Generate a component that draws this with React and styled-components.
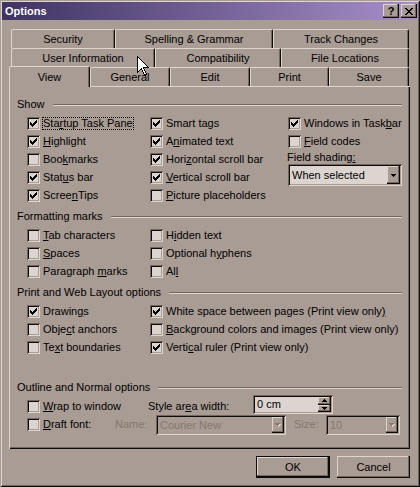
import React from "react";
import styled, { createGlobalStyle, css } from "styled-components";

const C = {
  face: "#a99c94",
  light: "#ded5ce",
  shadow: "#74675f",
  dark: "#0e0b0a",
  field: "#dcd5cf",
  gray: "#84776f",
};

const Global = createGlobalStyle`
  html, body { margin: 0; padding: 0; background: ${C.face}; }
  body {
    font-family: "Liberation Sans", Arial, sans-serif;
    font-size: 11px;
    line-height: 13px;
    color: #000;
  }
  #root { width: 420px; height: 487px; }
`;

const raised = css`
  box-shadow: inset -1px -1px 0 ${C.dark}, inset -2px -2px 0 ${C.shadow},
    inset 1px 1px 0 ${C.light};
`;

const sunken = css`
  box-shadow: inset 1px 1px 0 ${C.shadow}, inset -1px -1px 0 ${C.light},
    inset 2px 2px 0 ${C.dark}, inset -2px -2px 0 ${C.face};
`;

const Dialog = styled.div`
  position: relative;
  box-sizing: border-box;
  width: 420px;
  height: 487px;
  padding: 2px;
  display: flex;
  flex-direction: column;
  background: ${C.face};
  box-shadow: inset 1px 1px 0 ${C.face}, inset -1px -1px 0 ${C.dark},
    inset 2px 2px 0 ${C.light}, inset -2px -2px 0 ${C.shadow};
`;

const TitleBar = styled.div`
  height: 18px;
  flex: none;
  display: flex;
  align-items: center;
  padding: 0 1px 0 3px;
  background: linear-gradient(to right, #3e3363, #a78fc9);
`;

const Title = styled.span`
  flex: 1;
  color: #fff;
  font-weight: bold;
  font-size: 11px;
`;

const CapButton = styled.div`
  box-sizing: border-box;
  width: 16px;
  height: 14px;
  margin-left: 2px;
  display: flex;
  align-items: center;
  justify-content: center;
  background: ${C.face};
  font-weight: bold;
  font-size: 11px;
  line-height: 12px;
  ${raised};
`;

const Body = styled.div`
  flex: 1;
  display: flex;
  flex-direction: column;
  padding: 9px 8px 0 7px;
`;

const TabRow = styled.div`
  display: flex;
  align-items: flex-end;
  height: 19px;
  padding-left: ${(p) => p.$inset || 0}px;
`;

const Tab = styled.div`
  box-sizing: border-box;
  flex: none;
  width: ${(p) => p.$w}px;
  height: 19px;
  padding-top: 1px;
  display: flex;
  align-items: center;
  justify-content: center;
  white-space: nowrap;
  background: ${C.face};
  border-top: 1px solid ${C.light};
  border-left: 1px solid ${C.light};
  border-right: 1px solid ${C.dark};
  border-radius: 2px 2px 0 0;
  box-shadow: inset -1px 0 0 ${C.shadow};
  ${(p) =>
    p.$active &&
    css`
      position: relative;
      z-index: 1;
      height: 21px;
      margin-bottom: -1px;
      padding-top: 0;
    `}
`;

const Panel = styled.div`
  box-sizing: border-box;
  width: 401px;
  height: 363px;
  padding: 12px 8px 0 8px;
  background: ${C.face};
  box-shadow: inset 1px 1px 0 ${C.light}, inset -1px -1px 0 ${C.dark},
    inset -2px -2px 0 ${C.shadow};
`;

const GroupHead = styled.div`
  display: flex;
  align-items: center;
  height: 13px;
  margin-top: ${(p) => p.$mt || 0}px;
  margin-bottom: 4px;
  white-space: nowrap;
  &::after {
    content: "";
    flex: 1;
    margin-left: 8px;
    border-top: 1px solid ${C.shadow};
    border-bottom: 1px solid ${C.light};
  }
`;

const Columns = styled.div`
  display: grid;
  grid-template-columns: 123px 138px 1fr;
  padding-left: 10px;
`;

const Col = styled.div`
  display: flex;
  flex-direction: column;
  ${(p) => p.$span && css`grid-column: 2 / 4;`}
`;

const CheckRow = styled.div`
  box-sizing: border-box;
  display: flex;
  align-items: flex-start;
  height: 18px;
  padding-top: 2px;
  white-space: nowrap;
  ${(p) => p.$w && css`width: ${p.$w}px; flex: none;`}
`;

const Box = styled.span`
  box-sizing: border-box;
  flex: none;
  width: 13px;
  height: 13px;
  display: flex;
  align-items: center;
  justify-content: center;
  background: ${C.field};
  ${sunken};
`;

const Label = styled.span`
  margin-left: 2px;
  padding: 0 1px;
  height: 13px;
  ${(p) =>
    p.$focus &&
    css`
      outline: 1px dotted #000;
      outline-offset: -1px;
    `}
`;

const Key = styled.u`
  text-decoration: underline;
  text-underline-offset: 1px;
`;

const FieldLabel = styled.div`
  height: 13px;
  margin-left: -1px;
  margin-top: ${(p) => p.$mt || 0}px;
  white-space: nowrap;
  color: ${(p) => (p.$disabled ? C.gray : "inherit")};
  ${(p) => p.$w && css`width: ${p.$w}px; flex: none;`}
`;

const Combo = styled.div`
  box-sizing: border-box;
  flex: none;
  width: ${(p) => p.$w}px;
  height: ${(p) => p.$h}px;
  margin-top: ${(p) => p.$mt || 0}px;
  padding: 2px;
  display: flex;
  background: ${(p) => (p.$disabled ? C.face : C.field)};
  color: ${(p) => (p.$disabled ? C.gray : "#000")};
  ${sunken};
`;

const ComboText = styled.span`
  flex: 1;
  display: flex;
  align-items: center;
  padding-left: 2px;
  white-space: nowrap;
  overflow: hidden;
`;

const ArrowButton = styled.span`
  box-sizing: border-box;
  flex: ${(p) => (p.$fill ? 1 : "none")};
  width: ${(p) => p.$w || 12}px;
  display: flex;
  align-items: center;
  justify-content: center;
  background: ${C.face};
  ${raised};
`;

const SpinButtons = styled.span`
  flex: none;
  width: 13px;
  display: flex;
  flex-direction: column;
`;

const OptionRow = styled.div`
  display: flex;
  align-items: flex-start;
  height: 18px;
  padding-left: 10px;
`;

const Gap = styled.span`
  flex: none;
  width: ${(p) => p.$w}px;
`;

const ButtonRow = styled.div`
  display: flex;
  justify-content: flex-end;
  gap: 7px;
  width: 401px;
  margin-top: 7px;
`;

const PushButton = styled.div`
  box-sizing: border-box;
  width: ${(p) => p.$w}px;
  height: 22px;
  display: flex;
  align-items: center;
  justify-content: center;
  background: ${C.face};
  ${(p) =>
    p.$default
      ? css`
          box-shadow: inset 0 0 0 1px ${C.dark}, inset -2px -2px 0 ${C.dark},
            inset -3px -3px 0 ${C.shadow}, inset 2px 2px 0 ${C.light};
        `
      : raised}
`;

const Cursor = styled.svg`
  position: absolute;
  left: 137px;
  top: 56px;
`;

/* small bitmap glyphs: check marks, caption cross, arrows */
function Pixels({ rows, color = "#000", emboss }) {
  const w = rows[0].length;
  const h = rows.length;
  const cells = [];
  rows.forEach((r, y) => {
    for (let x = 0; x < w; x++) if (r[x] === "x") cells.push([x, y]);
  });
  const pad = emboss ? 1 : 0;
  return (
    <svg width={w + pad} height={h + pad} shapeRendering="crispEdges" style={{ display: "block" }}>
      {emboss &&
        cells.map(([x, y]) => (
          <rect key={"e" + x + "-" + y} x={x + 1} y={y + 1} width="1" height="1" fill={C.light} />
        ))}
      {cells.map(([x, y]) => (
        <rect key={x + "-" + y} x={x} y={y} width="1" height="1" fill={color} />
      ))}
    </svg>
  );
}

const CHECK = ["......x", ".....xx", "x...xxx", "xx.xxx.", "xxxxx..", ".xxx...", "..x...."];
const CROSS = ["xx....xx", ".xx..xx.", "..xxxx..", "...xx...", "..xxxx..", ".xx..xx.", "xx....xx"];
const DOWN = ["xxxxx", ".xxx.", "..x.."];
const UP = ["..x..", ".xxx.", "xxxxx"];

function Accel({ text, k }) {
  if (k == null) return text;
  return (
    <>
      {text.slice(0, k)}
      <Key>{text[k]}</Key>
      {text.slice(k + 1)}
    </>
  );
}

function Check({ text, k, checked, focus, w }) {
  return (
    <CheckRow $w={w}>
      <Box>{checked && <Pixels rows={CHECK} />}</Box>
      <Label $focus={focus}>
        <Accel text={text} k={k} />
      </Label>
    </CheckRow>
  );
}

function Dropdown({ text, w, h, mt, disabled, arrow }) {
  return (
    <Combo $w={w} $h={h} $mt={mt} $disabled={disabled}>
      <ComboText>{text}</ComboText>
      <ArrowButton $w={arrow}>
        {disabled ? <Pixels rows={DOWN} color={C.gray} emboss /> : <Pixels rows={DOWN} />}
      </ArrowButton>
    </Combo>
  );
}

const tabRows = [
  { inset: 2, tabs: [["Security", 104], ["Spelling & Grammar", 158], ["Track Changes", 136]] },
  { inset: 2, tabs: [["User Information", 144], ["Compatibility", 126], ["File Locations", 128]] },
  {
    inset: 0,
    tabs: [["View", 81, true], ["General", 80], ["Edit", 80], ["Print", 79], ["Save", 80]],
  },
];

const show = [
  [
    { text: "Startup Task Pane", k: 3, checked: true, focus: true },
    { text: "Highlight", k: 0, checked: true },
    { text: "Bookmarks", k: 3 },
    { text: "Status bar", k: 4, checked: true },
    { text: "ScreenTips", k: 5, checked: true },
  ],
  [
    { text: "Smart tags", checked: true },
    { text: "Animated text", k: 1, checked: true },
    { text: "Horizontal scroll bar", k: 4, checked: true },
    { text: "Vertical scroll bar", k: 0, checked: true },
    { text: "Picture placeholders", k: 0 },
  ],
];

const formatting = [
  [
    { text: "Tab characters", k: 0 },
    { text: "Spaces", k: 0 },
    { text: "Paragraph marks", k: 10 },
  ],
  [
    { text: "Hidden text", k: 1 },
    { text: "Optional hyphens", k: 10 },
    { text: "All", k: 2 },
  ],
];

const layout = [
  [
    { text: "Drawings", k: 6, checked: true },
    { text: "Object anchors", k: 4 },
    { text: "Text boundaries", k: 2 },
  ],
  [
    { text: "White space between pages (Print view only)", k: 42, checked: true },
    { text: "Background colors and images (Print view only)", k: 0 },
    { text: "Vertical ruler (Print view only)", k: 5, checked: true },
  ],
];

function CheckColumn({ items, span }) {
  return (
    <Col $span={span}>
      {items.map((it) => (
        <Check key={it.text} {...it} />
      ))}
    </Col>
  );
}

export default function App() {
  return (
    <>
      <Global />
      <Dialog>
        <TitleBar>
          <Title>Options</Title>
          <CapButton>?</CapButton>
          <CapButton>
            <Pixels rows={CROSS} />
          </CapButton>
        </TitleBar>

        <Body>
          {tabRows.map((row, i) => (
            <TabRow key={i} $inset={row.inset}>
              {row.tabs.map(([label, w, active]) => (
                <Tab key={label} $w={w} $active={active}>
                  {label}
                </Tab>
              ))}
            </TabRow>
          ))}

          <Panel>
            <GroupHead>Show</GroupHead>
            <Columns>
              <CheckColumn items={show[0]} />
              <CheckColumn items={show[1]} />
              <Col>
                <Check text="Windows in Taskbar" k={15} checked />
                <Check text="Field codes" k={0} />
                <FieldLabel>
                  <Accel text="Field shading:" k={13} />
                </FieldLabel>
                <Dropdown text="When selected" w={114} h={22} arrow={13} />
              </Col>
            </Columns>

            <GroupHead $mt={5}>Formatting marks</GroupHead>
            <Columns>
              <CheckColumn items={formatting[0]} />
              <CheckColumn items={formatting[1]} />
            </Columns>

            <GroupHead $mt={5}>Print and Web Layout options</GroupHead>
            <Columns>
              <CheckColumn items={layout[0]} />
              <CheckColumn items={layout[1]} span />
            </Columns>

            <GroupHead $mt={24}>Outline and Normal options</GroupHead>
            <OptionRow>
              <Check text="Wrap to window" k={0} w={122} />
              <FieldLabel $w={105} $mt={2}>
                <Accel text="Style area width:" k={8} />
              </FieldLabel>
              <Combo $w={80} $h={19} $mt={-3}>
                <ComboText>0 cm</ComboText>
                <SpinButtons>
                  <ArrowButton $w={13} $fill>
                    <Pixels rows={UP} />
                  </ArrowButton>
                  <ArrowButton $w={13} $fill>
                    <Pixels rows={DOWN} />
                  </ArrowButton>
                </SpinButtons>
              </Combo>
            </OptionRow>
            <OptionRow>
              <Check text="Draft font:" k={0} w={89} />
              <FieldLabel $w={41} $mt={2} $disabled>
                Name:
              </FieldLabel>
              <Dropdown text="Courier New" w={130} h={20} mt={-1} disabled />
              <Gap $w={9} />
              <FieldLabel $w={32} $mt={2} $disabled>
                Size:
              </FieldLabel>
              <Dropdown text="10" w={74} h={20} mt={-1} disabled />
            </OptionRow>
          </Panel>

          <ButtonRow>
            <PushButton $w={74} $default>
              OK
            </PushButton>
            <PushButton $w={73}>Cancel</PushButton>
          </ButtonRow>
        </Body>

        <Cursor width="13" height="21" viewBox="0 0 13 21">
          <path
            d="M0.5 0.5 V16.5 L4.5 12.5 L7.5 19.5 L9.5 18.5 L6.5 11.5 H11.5 Z"
            fill="#fff"
            stroke="#000"
            strokeWidth="1"
            shapeRendering="crispEdges"
          />
        </Cursor>
      </Dialog>
    </>
  );
}
